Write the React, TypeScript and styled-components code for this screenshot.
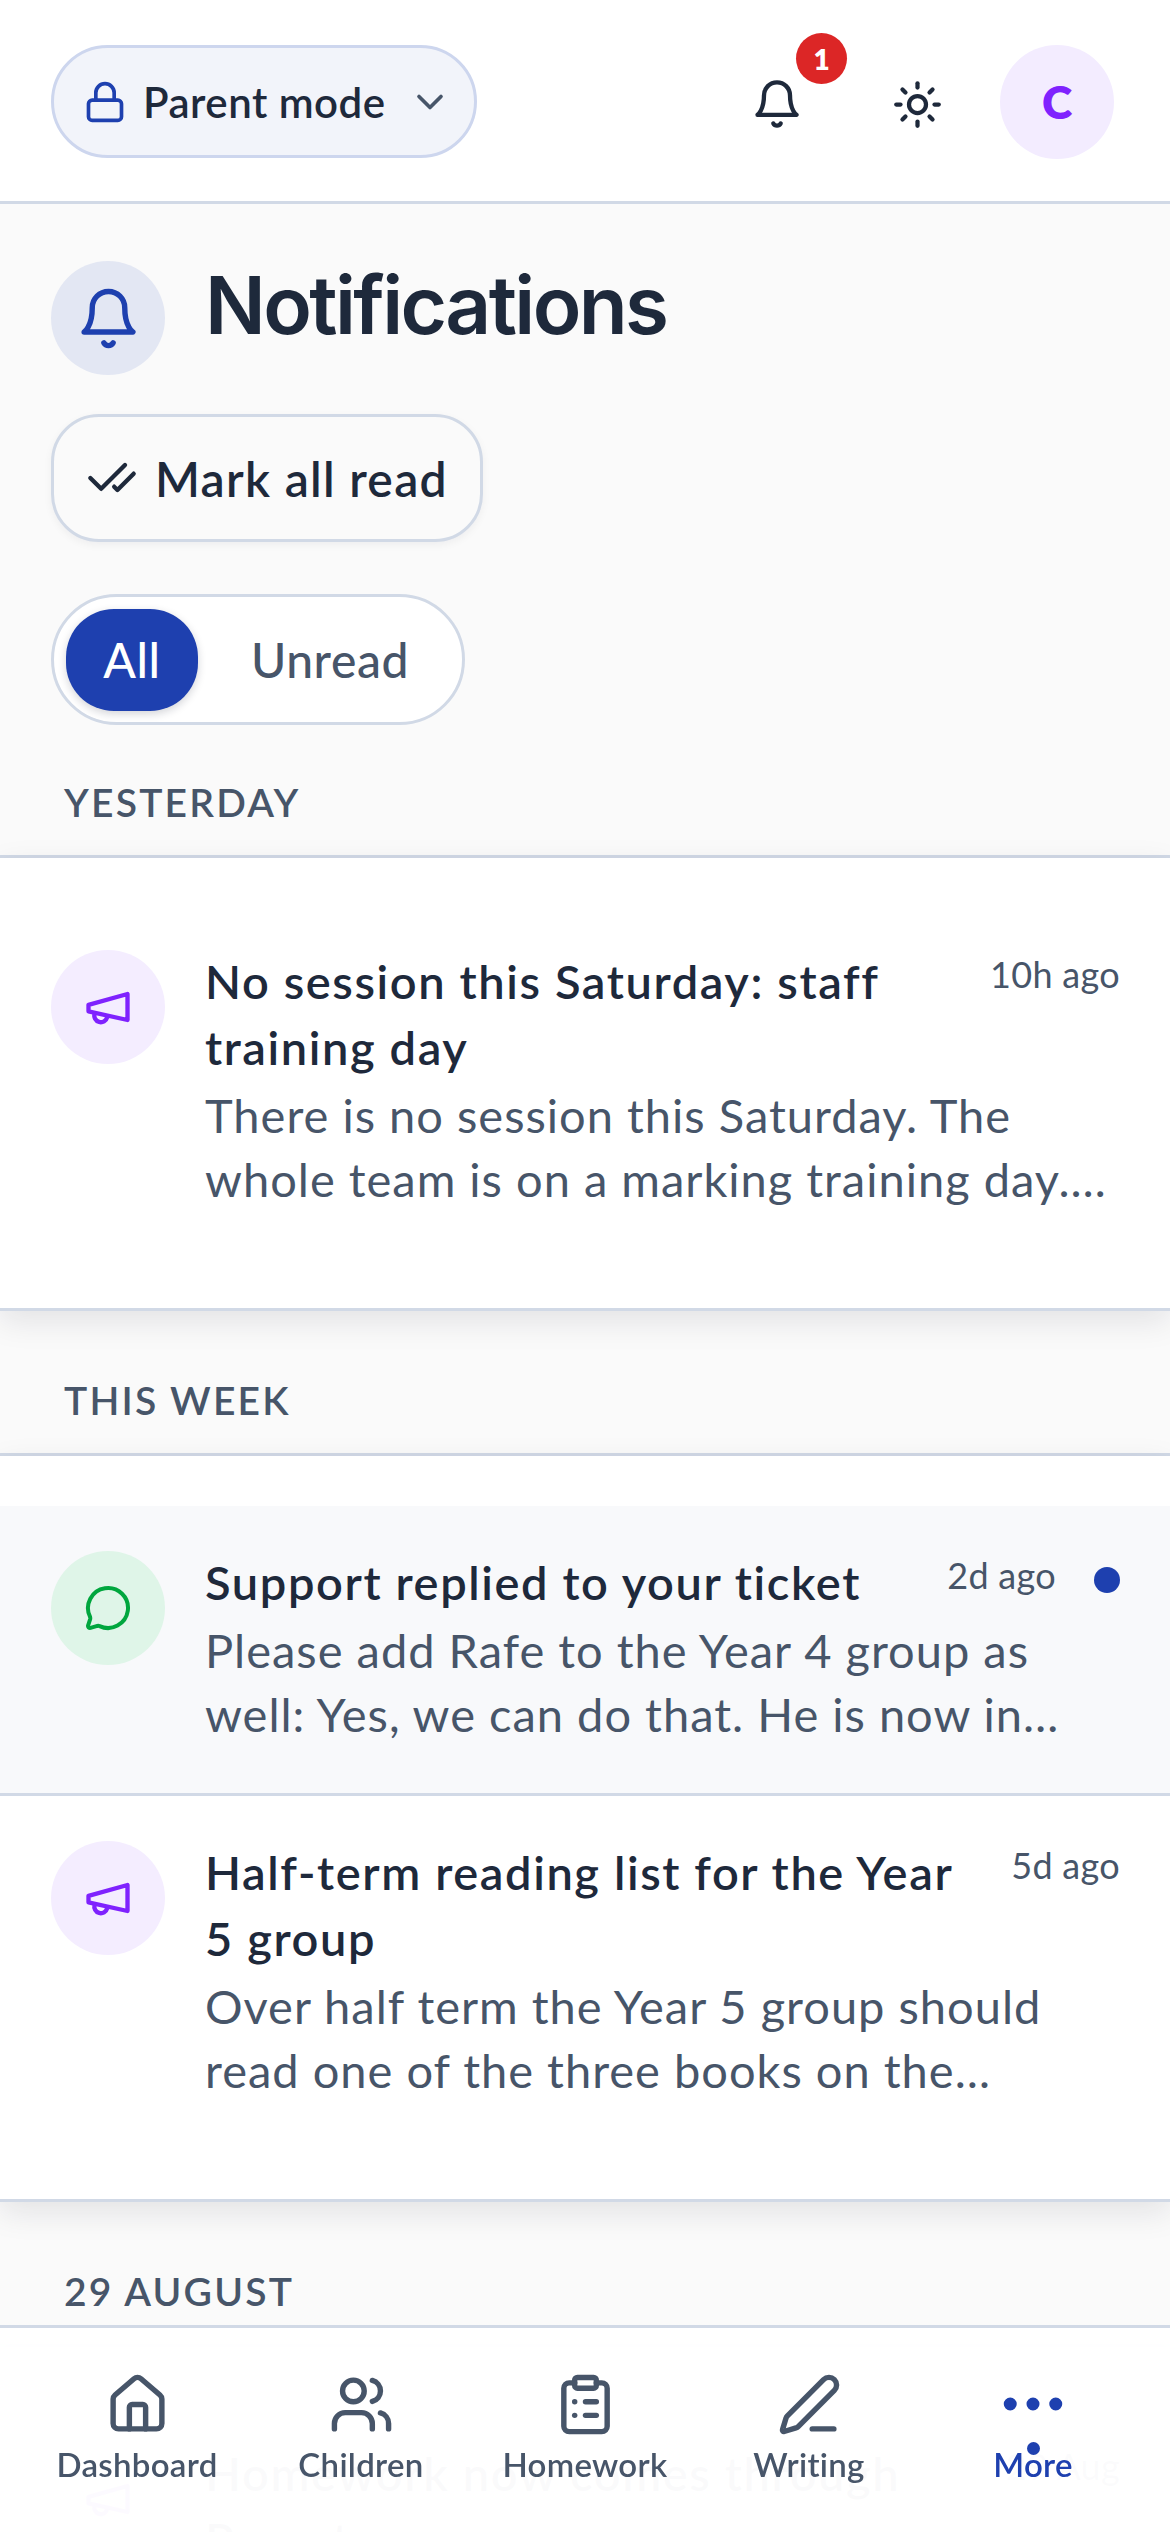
import React from 'react';
import styled, { createGlobalStyle } from 'styled-components';
import {
  CheckCheck,
  ChevronDown,
  ClipboardList,
  Ellipsis,
  House,
  Lock,
  MessageCircle,
  PenLine,
  Sun,
  Users,
} from 'lucide-react';

const GlobalStyle = createGlobalStyle`
  html, body {
    margin: 0;
    background: #fafafa;
    font-family: 'Lato', 'Liberation Sans', sans-serif;
    color: #1e293b;
  }
  body {
    height: 2532px;
    overflow: hidden;
  }
`;

const Screen = styled.div`
  width: 1170px;
  height: 2532px;
  overflow: hidden;
  background: #fafafa;
`;

const TopBar = styled.header`
  height: 199px;
  box-sizing: content-box;
  background: #ffffff;
  border-bottom: 3px solid #d1d9e6;
  display: flex;
  align-items: center;
  padding: 2px 56px 0 51px;
`;

const ModeButton = styled.button`
  width: 426px;
  height: 113px;
  box-sizing: border-box;
  border: 3px solid #cdd6ee;
  border-radius: 57px;
  background: #f2f4fa;
  display: flex;
  align-items: center;
  padding: 0 0 0 29px;
  color: #1e293b;
  font: 600 42px 'Lato', sans-serif;
  letter-spacing: 0.5px;
  svg:first-child {
    color: #1e40af;
    margin-right: 16px;
  }
  svg:last-child {
    color: #475569;
    margin-left: 22px;
  }
`;

const TopActions = styled.div`
  margin-left: auto;
  display: flex;
  align-items: center;
`;

const ToolSlot = styled.div`
  position: relative;
  display: flex;
  margin-top: 5px;
`;

const BellSlot = styled(ToolSlot)`
  margin-right: 89px;
`;

const CountBadge = styled.span`
  position: absolute;
  left: 45px;
  top: -45px;
  width: 51px;
  height: 51px;
  border-radius: 50%;
  background: #dc2626;
  color: #ffffff;
  font: 800 28px 'Lato', sans-serif;
  display: flex;
  align-items: center;
  justify-content: center;
`;

const Avatar = styled.div`
  width: 114px;
  height: 114px;
  margin-left: 57px;
  border-radius: 50%;
  background: #f3ecff;
  color: #7f22fe;
  font: 800 46px 'Lato', sans-serif;
  display: flex;
  align-items: center;
  justify-content: center;
`;

const PageHead = styled.section`
  padding: 57px 51px 0;
`;

const TitleRow = styled.div`
  display: flex;
  align-items: flex-start;
  gap: 40px;
`;

const IconDisc = styled.div<{ $bg: string; $fg: string }>`
  flex: none;
  width: 114px;
  height: 114px;
  border-radius: 50%;
  background: ${(p) => p.$bg};
  color: ${(p) => p.$fg};
  display: flex;
  align-items: center;
  justify-content: center;
`;

const PageTitle = styled.h1`
  margin: 0;
  height: 114px;
  font: 600 80px/88px 'Inter', sans-serif;
  letter-spacing: -2.6px;
  color: #1e293b;
`;

const MarkAllButton = styled.button`
  margin-top: 39px;
  width: 432px;
  height: 128px;
  box-sizing: border-box;
  border: 3px solid #d1d9e6;
  border-radius: 48px;
  background: #fafafa;
  box-shadow: 0 3px 8px rgba(15, 23, 42, 0.05);
  display: flex;
  align-items: center;
  padding: 0 0 0 32px;
  gap: 17px;
  color: #1e293b;
  font: 600 48px 'Lato', sans-serif;
  letter-spacing: 1.3px;
`;

const FilterPill = styled.div`
  margin-top: 52px;
  width: 414px;
  height: 131px;
  box-sizing: border-box;
  border: 3px solid #d1d9e6;
  border-radius: 66px;
  background: #ffffff;
  display: flex;
  align-items: center;
  padding: 0 12px;
  font: 500 48px 'Lato', sans-serif;
  letter-spacing: 0.6px;
`;

const FilterTab = styled.div<{ $active?: boolean }>`
  flex: none;
  height: 102px;
  width: ${(p) => (p.$active ? '132px' : '264px')};
  border-radius: 48px;
  display: flex;
  align-items: center;
  justify-content: center;
  color: ${(p) => (p.$active ? '#ffffff' : '#475569')};
  background: ${(p) => (p.$active ? '#1e40af' : 'transparent')};
  box-shadow: ${(p) => (p.$active ? '0 3px 8px rgba(15, 23, 42, 0.18)' : 'none')};
`;

const DayHeading = styled.h2<{ $first?: boolean }>`
  margin: 0;
  height: ${(p) => (p.$first ? '133px' : '145px')};
  box-sizing: border-box;
  border-bottom: 3px solid #d1d9e6;
  padding: ${(p) => (p.$first ? '49px' : '61px')} 64px 0;
  font: 600 39px/56px 'Lato', sans-serif;
  letter-spacing: 2.2px;
  color: #475569;
  text-transform: uppercase;
`;

const DayGroup = styled.div<{ $first?: boolean }>`
  background: #ffffff;
  padding: ${(p) => (p.$first ? '47px' : '50px')} 0 50px;
  border-bottom: 3px solid #d1d9e6;
  box-shadow: 0 10px 30px rgba(15, 23, 42, 0.1);
  position: relative;
`;

const NoticeRow = styled.article<{ $unread?: boolean }>`
  display: flex;
  align-items: flex-start;
  gap: 40px;
  padding: 45px 50px 45px 51px;
  background: ${(p) => (p.$unread ? '#f8f9fb' : 'transparent')};
  border-bottom: ${(p) => (p.$unread ? '3px solid #d1d9e6' : 'none')};
`;

const NoticeBody = styled.div`
  flex: 1;
  min-width: 0;
  margin-top: -2px;
  padding-bottom: 2px;
`;

const NoticeTop = styled.div`
  display: flex;
  align-items: flex-start;
  justify-content: space-between;
`;

const NoticeTitle = styled.div`
  font: 600 47px/66px 'Lato', sans-serif;
  letter-spacing: 1.6px;
  color: #1e293b;
  white-space: nowrap;
`;

const NoticeTime = styled.time`
  font: 400 36px/48px 'Lato', sans-serif;
  letter-spacing: 0.3px;
  color: #475569;
  white-space: nowrap;
`;

const TimeGroup = styled.div`
  display: flex;
  align-items: center;
  gap: 38px;
  margin-top: 2px;
`;

const UnreadDot = styled.span`
  width: 26px;
  height: 26px;
  border-radius: 50%;
  background: #1e40af;
  margin-top: 10px;
`;

const NoticeText = styled.div`
  margin-top: 3px;
  font: 400 47px/64px 'Lato', sans-serif;
  letter-spacing: 1px;
  color: #475569;
  white-space: nowrap;
`;

const Line = styled.div``;

const TabBar = styled.nav`
  position: fixed;
  left: 0;
  bottom: 0;
  width: 1170px;
  height: 207px;
  box-sizing: border-box;
  border-top: 3px solid #d1d9e6;
  background: rgba(255, 255, 255, 0.982);
  display: grid;
  grid-template-columns: repeat(5, 224px);
  padding: 40px 25px 0;
`;

const TabItem = styled.div<{ $active?: boolean }>`
  position: relative;
  display: flex;
  flex-direction: column;
  align-items: center;
  color: ${(p) => (p.$active ? '#1e40af' : '#475569')};
  font: 600 33px/40px 'Lato', sans-serif;
  letter-spacing: 0.3px;
`;

const TabIconSlot = styled.div`
  height: 72px;
  display: flex;
  align-items: center;
  justify-content: center;
`;

const TabDot = styled.span`
  position: absolute;
  top: 74px;
  left: 106px;
  width: 13px;
  height: 13px;
  border-radius: 50%;
  background: #1e40af;
`;

const TabLabel = styled.span`
  margin-top: 4px;
`;

/* older outlines of the bell and megaphone, lucide has since redrawn both */
const BellIcon: React.FC<{ size: number }> = ({ size }) => (
  <svg width={size} height={size} viewBox="0 0 24 24" fill="none" stroke="currentColor" strokeWidth="2" strokeLinecap="round" strokeLinejoin="round">
    <path d="M6 8a6 6 0 0 1 12 0c0 7 3 9 3 9H3s3-2 3-9" />
    <path d="M10.3 21a1.94 1.94 0 0 0 3.4 0" />
  </svg>
);

const MegaphoneIcon = () => (
  <svg width="52" height="52" viewBox="0 0 24 24" fill="none" stroke="currentColor" strokeWidth="2" strokeLinecap="round" strokeLinejoin="round">
    <path d="M3 11l18-5v12L3 14v-3z" />
    <path d="M11.6 16.8a3 3 0 1 1-5.8-1.6" />
  </svg>
);

const groups = [
  {
    day: 'Yesterday',
    first: true,
    rows: [
      {
        title: ['No session this Saturday: staff', 'training day'],
        text: ['There is no session this Saturday. The', 'whole team is on a marking training day.…'],
        time: '10h ago',
        kind: 'news',
      },
    ],
  },
  {
    day: 'This week',
    rows: [
      {
        title: ['Support replied to your ticket'],
        text: ['Please add Rafe to the Year 4 group as', 'well: Yes, we can do that. He is now in…'],
        time: '2d ago',
        kind: 'support',
        unread: true,
      },
      {
        title: ['Half-term reading list for the Year', '5 group'],
        text: ['Over half term the Year 5 group should', 'read one of the three books on the…'],
        time: '5d ago',
        kind: 'news',
      },
    ],
  },
  {
    day: '29 August',
    rows: [
      {
        title: ['Homework now comes through', 'Parent app'],
        text: ['From this term homework is set on the', 'app and parents can see it.…'],
        time: '29 Aug',
        kind: 'news',
      },
    ],
  },
];

const tabs = [
  { label: 'Dashboard', Icon: House, size: 65 },
  { label: 'Children', Icon: Users, size: 65 },
  { label: 'Homework', Icon: ClipboardList, size: 65 },
  { label: 'Writing', Icon: PenLine, size: 65 },
  { label: 'More', Icon: Ellipsis, size: 78, active: true },
];

const App: React.FC = () => (
  <Screen>
    <GlobalStyle />
    <TopBar>
      <ModeButton>
        <Lock size={44} strokeWidth={2} />
        Parent mode
        <ChevronDown size={44} strokeWidth={2} />
      </ModeButton>
      <TopActions>
        <BellSlot>
          <BellIcon size={52} />
          <CountBadge>1</CountBadge>
        </BellSlot>
        <ToolSlot>
          <Sun size={51} strokeWidth={2} />
        </ToolSlot>
        <Avatar>C</Avatar>
      </TopActions>
    </TopBar>

    <PageHead>
      <TitleRow>
        <IconDisc $bg="#e3e7f3" $fg="#1e40af">
          <BellIcon size={65} />
        </IconDisc>
        <PageTitle>Notifications</PageTitle>
      </TitleRow>
      <MarkAllButton>
        <CheckCheck size={52} strokeWidth={2} />
        Mark all read
      </MarkAllButton>
      <FilterPill>
        <FilterTab $active>All</FilterTab>
        <FilterTab>Unread</FilterTab>
      </FilterPill>
    </PageHead>

    {groups.map((group) => (
      <section key={group.day}>
        <DayHeading $first={group.first}>{group.day}</DayHeading>
        <DayGroup $first={group.first}>
          {group.rows.map((row) => (
            <NoticeRow key={row.title[0]} $unread={row.unread}>
              {row.kind === 'support' ? (
                <IconDisc $bg="#dff5e8" $fg="#00a63e">
                  <MessageCircle size={48} strokeWidth={2} />
                </IconDisc>
              ) : (
                <IconDisc $bg="#f4edff" $fg="#7f22fe">
                  <MegaphoneIcon />
                </IconDisc>
              )}
              <NoticeBody>
                <NoticeTop>
                  <NoticeTitle>
                    {row.title.map((line) => (
                      <Line key={line}>{line}</Line>
                    ))}
                  </NoticeTitle>
                  <TimeGroup>
                    <NoticeTime>{row.time}</NoticeTime>
                    {row.unread && <UnreadDot />}
                  </TimeGroup>
                </NoticeTop>
                <NoticeText>
                  {row.text.map((line) => (
                    <Line key={line}>{line}</Line>
                  ))}
                </NoticeText>
              </NoticeBody>
            </NoticeRow>
          ))}
        </DayGroup>
      </section>
    ))}

    <TabBar>
      {tabs.map(({ label, Icon, size, active }) => (
        <TabItem key={label} $active={active}>
          <TabIconSlot>
            <Icon size={size} strokeWidth={2} />
          </TabIconSlot>
          {active && <TabDot />}
          <TabLabel>{label}</TabLabel>
        </TabItem>
      ))}
    </TabBar>
  </Screen>
);

export default App;
